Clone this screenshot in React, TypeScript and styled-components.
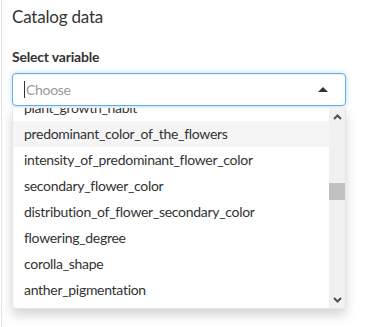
import styled, { createGlobalStyle } from "styled-components";

const GlobalStyle = createGlobalStyle`
    html, body {
        margin: 0;
        padding: 0;
        background: #ffffff;
    }
    body {
        font-family: Lato, "Noto Sans", sans-serif;
        color: #333333;
    }
`;

const Panel = styled.div`
    margin-left: 1px;
    border-left: 1px solid #e3e3e3;
    width: 368px;
    height: 327px;
    box-sizing: border-box;
    padding: 5px 0 0 10px;
`;

const Title = styled.h3`
    margin: 0;
    font-size: 17px;
    font-weight: 400;
    line-height: 24px;
    letter-spacing: -0.2px;
    color: #333333;
`;

const Label = styled.label`
    display: block;
    margin-top: 19px;
    font-size: 14px;
    font-weight: 700;
    line-height: 18px;
    letter-spacing: -0.2px;
`;

const Select = styled.div`
    margin-top: 7px;
    width: 334px;
    position: relative;
`;

const Input = styled.div`
    height: 33px;
    box-sizing: border-box;
    border: 1px solid #66afe9;
    border-radius: 4px;
    box-shadow: inset 0 1px 1px rgba(0, 0, 0, 0.075), 0 0 5px rgba(102, 175, 233, 0.5);
    display: flex;
    align-items: center;
    padding: 0 17px 0 11px;
`;

const Placeholder = styled.span`
    flex: 1;
    font-size: 14px;
    letter-spacing: -0.3px;
    color: #999999;
    border-left: 1px solid #333333;
    padding-left: 1px;
    line-height: 17px;
`;

const Caret = styled.span`
    width: 0;
    height: 0;
    border-left: 5px solid transparent;
    border-right: 5px solid transparent;
    border-bottom: 5px solid #333333;
`;

const Menu = styled.div`
    margin-top: 2px;
    height: 201px;
    box-sizing: border-box;
    border: 1px solid #e6e6e6;
    border-top: none;
    border-radius: 0 0 4px 4px;
    background: #ffffff;
    box-shadow: 0 6px 12px rgba(0, 0, 0, 0.175);
    display: flex;
    overflow: hidden;
`;

const Options = styled.ul`
    flex: 1;
    margin: 0;
    padding: 0;
    list-style: none;
    overflow: hidden;
`;

const Option = styled.li<{ $active?: boolean; $first?: boolean }>`
    height: 26px;
    line-height: 26px;
    padding-left: 11px;
    font-size: 14px;
    letter-spacing: -0.3px;
    color: #333333;
    white-space: nowrap;
    margin-top: ${({ $first }) => ($first ? "-13px" : "0")};
    background: ${({ $active }) => ($active ? "#f5f5f5" : "transparent")};
`;

const Scrollbar = styled.div`
    width: 16px;
    background: #f1f1f1;
    display: flex;
    flex-direction: column;
    align-items: center;
`;

const Arrow = styled.div`
    height: 17px;
    width: 16px;
    display: flex;
    align-items: center;
    justify-content: center;
`;

const Track = styled.div`
    flex: 1;
    width: 16px;
    padding-top: 58px;
    box-sizing: border-box;
`;

const Thumb = styled.div`
    height: 17px;
    background: #c1c1c1;
`;

const items = [
    "plant_growth_habit",
    "predominant_color_of_the_flowers",
    "intensity_of_predominant_flower_color",
    "secondary_flower_color",
    "distribution_of_flower_secondary_color",
    "flowering_degree",
    "corolla_shape",
    "anther_pigmentation",
];

const Chevron = ({ up }: { up?: boolean }) => (
    <svg width="9" height="6" viewBox="0 0 9 6">
        <path
            d={up ? "M1 5 L4.5 1.5 L8 5" : "M1 1 L4.5 4.5 L8 1"}
            fill="none"
            stroke="#505050"
            strokeWidth="2"
        />
    </svg>
);

export default function App() {
    return (
        <>
            <GlobalStyle />
            <Panel>
                <Title>Catalog data</Title>
                <Label>Select variable</Label>
                <Select>
                    <Input>
                        <Placeholder>Choose</Placeholder>
                        <Caret />
                    </Input>
                    <Menu>
                        <Options>
                            {items.map((item, i) => (
                                <Option key={item} $first={i === 0} $active={i === 1}>
                                    {item}
                                </Option>
                            ))}
                        </Options>
                        <Scrollbar>
                            <Arrow>
                                <Chevron up />
                            </Arrow>
                            <Track>
                                <Thumb />
                            </Track>
                            <Arrow>
                                <Chevron />
                            </Arrow>
                        </Scrollbar>
                    </Menu>
                </Select>
            </Panel>
        </>
    );
}
